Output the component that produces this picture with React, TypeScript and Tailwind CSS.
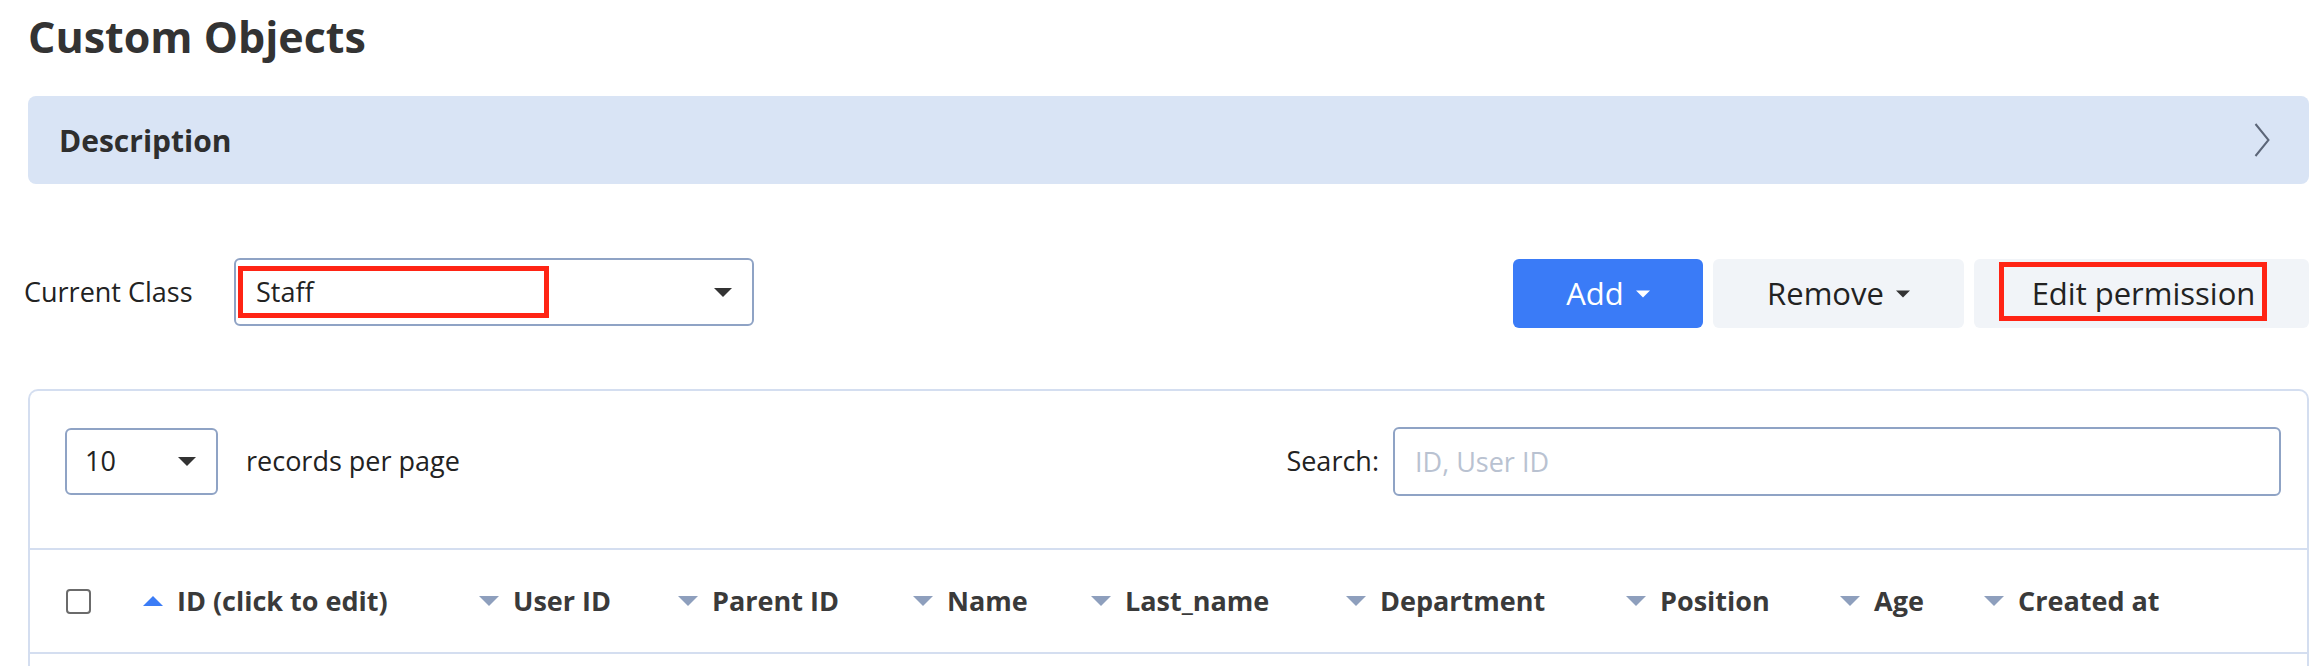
import React from 'react';

// Sort marker used in the table header
const SortMark = ({ active }: { active?: boolean }) => (
  <svg width="20" height="10" viewBox="0 0 20 10" className="shrink-0">
    {active ? (
      <polygon points="10,0 20,10 0,10" fill="#3b7cf6" />
    ) : (
      <polygon points="0,0 20,0 10,10" fill="#8e9fbd" />
    )}
  </svg>
);

const Caret = ({ color, w = 18, h = 9 }: { color: string; w?: number; h?: number }) => (
  <svg width={w} height={h} viewBox="0 0 18 9" className="shrink-0">
    <polygon points="0,0 18,0 9,9" fill={color} />
  </svg>
);

const columns = [
  { label: 'ID (click to edit)', width: 'w-[336px]', active: true },
  { label: 'User ID', width: 'w-[199px]' },
  { label: 'Parent ID', width: 'w-[235px]' },
  { label: 'Name', width: 'w-[178px]' },
  { label: 'Last_name', width: 'w-[255px]' },
  { label: 'Department', width: 'w-[280px]' },
  { label: 'Position', width: 'w-[214px]' },
  { label: 'Age', width: 'w-[144px]' },
  { label: 'Created at', width: 'w-[250px]' },
];

export default function App() {
  return (
    <div className="w-[2310px] h-[666px] overflow-hidden bg-white font-['Open_Sans',sans-serif] text-[#222]">
      <div className="pl-[28px] pr-[1px]">
        {/* Page title */}
        <h1 className="pt-[7px] text-[43px] font-bold leading-[60px] text-[#333]">Custom Objects</h1>

        {/* Collapsible description panel */}
        <div className="mt-[29px] flex h-[88px] items-center justify-between rounded-[8px] bg-[#d9e4f5] pl-[31px] pr-[39px]">
          <span className="text-[30px] font-bold text-[#2e2e2e]">Description</span>
          <svg width="16" height="34" viewBox="0 0 16 34">
            <polyline points="1.5,1 14.5,17 1.5,33" fill="none" stroke="#5c6678" strokeWidth="2" />
          </svg>
        </div>

        {/* Class picker + actions */}
        <div className="mt-[74px] flex h-[70px] items-start">
          <span className="-ml-[4px] flex h-[68px] w-[210px] items-center text-[27px]">Current Class</span>
          <div className="relative flex h-[68px] w-[520px] items-center justify-between rounded-[6px] border-2 border-[#8fa3c5] pl-[20px] pr-[20px]">
            <span className="text-[27px]">Staff</span>
            <Caret color="#333" />
            <div className="pointer-events-none absolute left-[2px] top-[6px] h-[52px] w-[311px] border-[5px] border-[#ff2414]" />
          </div>

          <div className="ml-auto mt-[1px] flex gap-[10px]">
            <button className="flex h-[69px] w-[190px] items-center justify-center gap-[12px] rounded-[6px] bg-[#3a7bf7] text-[31px] text-white">
              Add
              <Caret color="#fff" w={14} h={8} />
            </button>
            <button className="flex h-[69px] w-[251px] items-center justify-center gap-[12px] rounded-[6px] bg-[#f1f4f8] text-[31px] text-[#222]">
              Remove
              <Caret color="#333" w={14} h={8} />
            </button>
            <button className="relative flex h-[69px] w-[335px] items-center justify-center rounded-[6px] bg-[#f1f4f8] pl-[4px] text-[31px] text-[#222]">
              Edit permission
              <div className="pointer-events-none absolute left-[25px] top-[3px] h-[59px] w-[268px] border-[5px] border-[#ff2414]" />
            </button>
          </div>
        </div>

        {/* Records table card */}
        <div className="mt-[61px] h-[400px] rounded-t-[10px] border-2 border-b-0 border-[#d4def0]">
          <div className="flex items-center pl-[35px] pr-[26px] pt-[36px] pb-[52px]">
            <div className="flex h-[67px] w-[153px] items-center justify-between rounded-[6px] border-2 border-[#8fa3c5] pl-[18px] pr-[20px]">
              <span className="text-[27px]">10</span>
              <Caret color="#333" />
            </div>
            <span className="ml-[28px] text-[27px]">records per page</span>
            <span className="ml-auto mr-[14px] text-[27px]">Search:</span>
            <input
              placeholder="ID, User ID"
              className="h-[69px] w-[888px] rounded-[6px] border-2 border-[#8fa3c5] pl-[20px] text-[27px] outline-none placeholder:text-[#b9c2d1]"
            />
          </div>

          <div className="flex h-[106px] items-center border-y-2 border-[#d4def0] pl-[36px]">
            <div className="w-[77px] shrink-0">
              <div className="h-[25px] w-[25px] rounded-[4px] border-2 border-[#6b6b6b]" />
            </div>
            {columns.map((c) => (
              <div key={c.label} className={`flex shrink-0 items-center gap-[14px] ${c.width}`}>
                <SortMark active={c.active} />
                <span className="whitespace-nowrap text-[27px] font-bold text-[#3a3a3a]">{c.label}</span>
              </div>
            ))}
          </div>
        </div>
      </div>
    </div>
  );
}
